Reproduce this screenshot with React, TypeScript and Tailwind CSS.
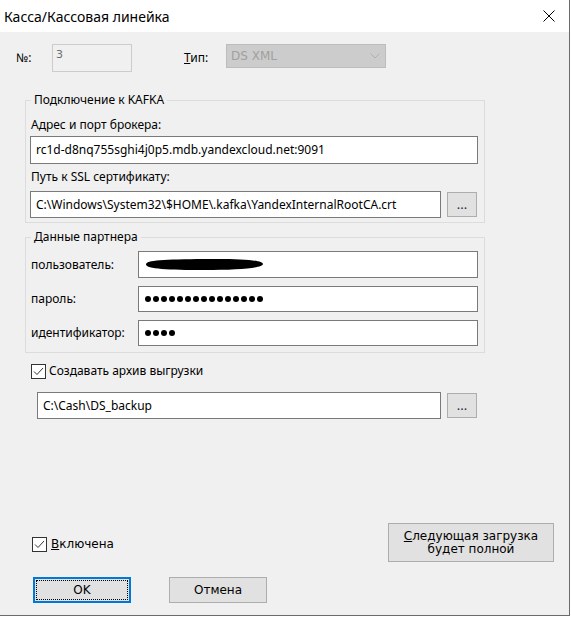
import type { ReactNode } from 'react'

const ui = { fontFamily: '"Noto Sans", "Open Sans", sans-serif' }
const classic = { fontFamily: '"DejaVu Sans", "Liberation Sans", sans-serif' }

function CheckBox({ checked }: { checked: boolean }) {
  return (
    <span className="w-[15px] h-[15px] shrink-0 border border-[#333333] bg-white flex items-center justify-center">
      {checked && (
        <svg width="13" height="13" viewBox="0 0 13 13">
          <polyline points="2,6.5 5,9.5 11,3" fill="none" stroke="#333333" strokeWidth="1" />
        </svg>
      )}
    </span>
  )
}

function Edit({ value, className }: { value: ReactNode; className: string }) {
  return (
    <div className={`bg-white border border-[#7a7a7a] flex items-center pl-[5px] text-[12px] text-black ${className}`} style={ui}>
      {value}
    </div>
  )
}

function BrowseButton({ className }: { className: string }) {
  return (
    <div className={`w-[30px] border border-[#adadad] bg-[#e1e1e1] flex items-end justify-center pb-[5px] text-[13px] leading-[13px] text-[#1f2a44] ${className}`} style={ui}>
      ...
    </div>
  )
}

function Dots({ count }: { count: number }) {
  return (
    <div className="flex gap-[2px] pl-[1px]">
      {Array.from({ length: count }).map((_, i) => (
        <span key={i} className="w-[6px] h-[6px] rounded-full bg-black" />
      ))}
    </div>
  )
}

export default function App() {
  return (
    <div className="w-[571px] h-[617px] bg-white">
      <div className="w-[570px] h-[616px] border-r border-b border-[#6b6b6b] flex flex-col">
        {/* title bar */}
        <div className="h-[32px] bg-white flex items-center justify-between pl-[4px] pr-[14px]">
          <span className="text-[14px] text-black" style={ui}>Касса/Кассовая линейка</span>
          <svg width="12" height="12" viewBox="0 0 12 12">
            <path d="M0.5 0.5 L11.5 11.5 M11.5 0.5 L0.5 11.5" stroke="#000" strokeWidth="1" />
          </svg>
        </div>

        <div className="flex-1 bg-[#f0f0f0] flex flex-col">
          {/* number and type */}
          <div className="flex items-start mt-[12px]">
            <div className="w-[52px] h-[28px] pl-[16px] flex items-center text-[12px] text-black" style={ui}>№:</div>
            <div className="w-[80px] h-[28px] border border-[#cccccc] bg-[#f0f0f0] pl-[3px] pt-[4px] text-[11px] leading-[12px] text-[#6d6d6d]" style={classic}>3</div>
            <div className="ml-[52px] w-[42px] h-[28px] flex items-center text-[12px] text-black" style={ui}>
              <span><span className="underline">Т</span>ип:</span>
            </div>
            <div className="w-[160px] h-[24px] border border-[#bcbcbc] bg-[#cccccc] flex items-center justify-between pl-[4px] pr-[5px] text-[12px] text-[#a0a0a0]" style={classic}>
              <span>DS XML</span>
              <svg width="10" height="6" viewBox="0 0 10 6">
                <polyline points="0.5,0.5 5,5 9.5,0.5" fill="none" stroke="#b0b0b0" strokeWidth="1" />
              </svg>
            </div>
          </div>

          {/* Kafka connection */}
          <fieldset className="ml-[25px] mt-[20px] w-[460px] border border-[#dcdcdc] pl-[4px] pr-[6px] pb-[4px]">
            <legend className="ml-[1px] px-[3px] text-[12px] leading-[16px] text-black" style={ui}>Подключение к KAFKA</legend>
            <div className="mt-[9px] pl-[1px] text-[12px] leading-[16px] text-black" style={ui}>Адрес и порт брокера:</div>
            <Edit className="mt-[3px] h-[28px]" value="rc1d-d8nq755sghi4j0p5.mdb.yandexcloud.net:9091" />
            <div className="mt-[5px] pl-[1px] text-[12px] leading-[16px] text-black" style={ui}>Путь к SSL сертификату:</div>
            <div className="mt-[6px] flex items-start gap-[6px]">
              <Edit className="w-[411px] h-[27px]" value="C:\Windows\System32\$HOME\.kafka\YandexInternalRootCA.crt" />
              <BrowseButton className="mt-[1px] h-[25px]" />
            </div>
          </fieldset>

          {/* partner credentials */}
          <fieldset className="ml-[25px] mt-[6px] w-[460px] border border-[#dcdcdc] pl-[4px] pr-[6px] pb-[6px]">
            <legend className="ml-[1px] px-[3px] text-[12px] leading-[16px] text-black" style={ui}>Данные партнера</legend>
            <div className="mt-[6px] flex flex-col gap-[8px]">
              <div className="flex items-center">
                <div className="w-[108px] pl-[1px] text-[12px] text-black" style={ui}>пользователь:</div>
                <Edit
                  className="flex-1 h-[27px] pl-[3px]"
                  value={
                    <svg width="120" height="15" viewBox="0 0 120 15">
                      <path d="M2 7.5 C2 3 20 2.5 60 2 C95 1.5 119 3 119 7 C119 11 95 13 60 13 C25 13 2 12 2 7.5 Z" fill="#000" />
                    </svg>
                  }
                />
              </div>
              <div className="flex items-center">
                <div className="w-[108px] pl-[1px] text-[12px] text-black" style={ui}>пароль:</div>
                <Edit className="flex-1 h-[26px]" value={<Dots count={15} />} />
              </div>
              <div className="flex items-center">
                <div className="w-[108px] pl-[1px] text-[12px] text-black" style={ui}>идентификатор:</div>
                <Edit className="flex-1 h-[26px]" value={<Dots count={4} />} />
              </div>
            </div>
          </fieldset>

          {/* archive */}
          <div className="ml-[31px] mt-[9px] flex items-center gap-[3px]">
            <CheckBox checked />
            <span className="text-[12px] text-black" style={ui}>Создавать архив выгрузки</span>
          </div>
          <div className="ml-[37px] mt-[12px] flex items-start gap-[6px]">
            <Edit className="w-[404px] h-[27px]" value="C:\Cash\DS_backup" />
            <BrowseButton className="mt-[1px] h-[25px]" />
          </div>

          <div className="flex-1" />

          {/* footer */}
          <div className="flex items-start">
            <div className="ml-[32px] mt-[12px] flex items-center gap-[4px]">
              <CheckBox checked />
              <span className="text-[12px] text-black" style={classic}><span className="underline">В</span>ключена</span>
            </div>
            <div className="ml-auto mr-[15px] w-[166px] h-[39px] border border-[#adadad] bg-[#e1e1e1] flex flex-col items-center justify-center text-[12px] leading-[13px] text-black" style={classic}>
              <span><span className="underline">С</span>ледующая загрузка</span>
              <span>будет полной</span>
            </div>
          </div>
          <div className="mt-[15px] mb-[12px] ml-[33px] flex gap-[38px]">
            <div className="w-[98px] h-[26px] border-2 border-[#0078d7] bg-[#e1e1e1] p-[1px]">
              <div className="w-full h-full border border-dotted border-black flex items-center justify-center text-[12px] text-black" style={classic}>OK</div>
            </div>
            <div className="w-[98px] h-[26px] border border-[#adadad] bg-[#e1e1e1] flex items-center justify-center text-[12px] text-black" style={classic}>Отмена</div>
          </div>
        </div>
      </div>
    </div>
  )
}
